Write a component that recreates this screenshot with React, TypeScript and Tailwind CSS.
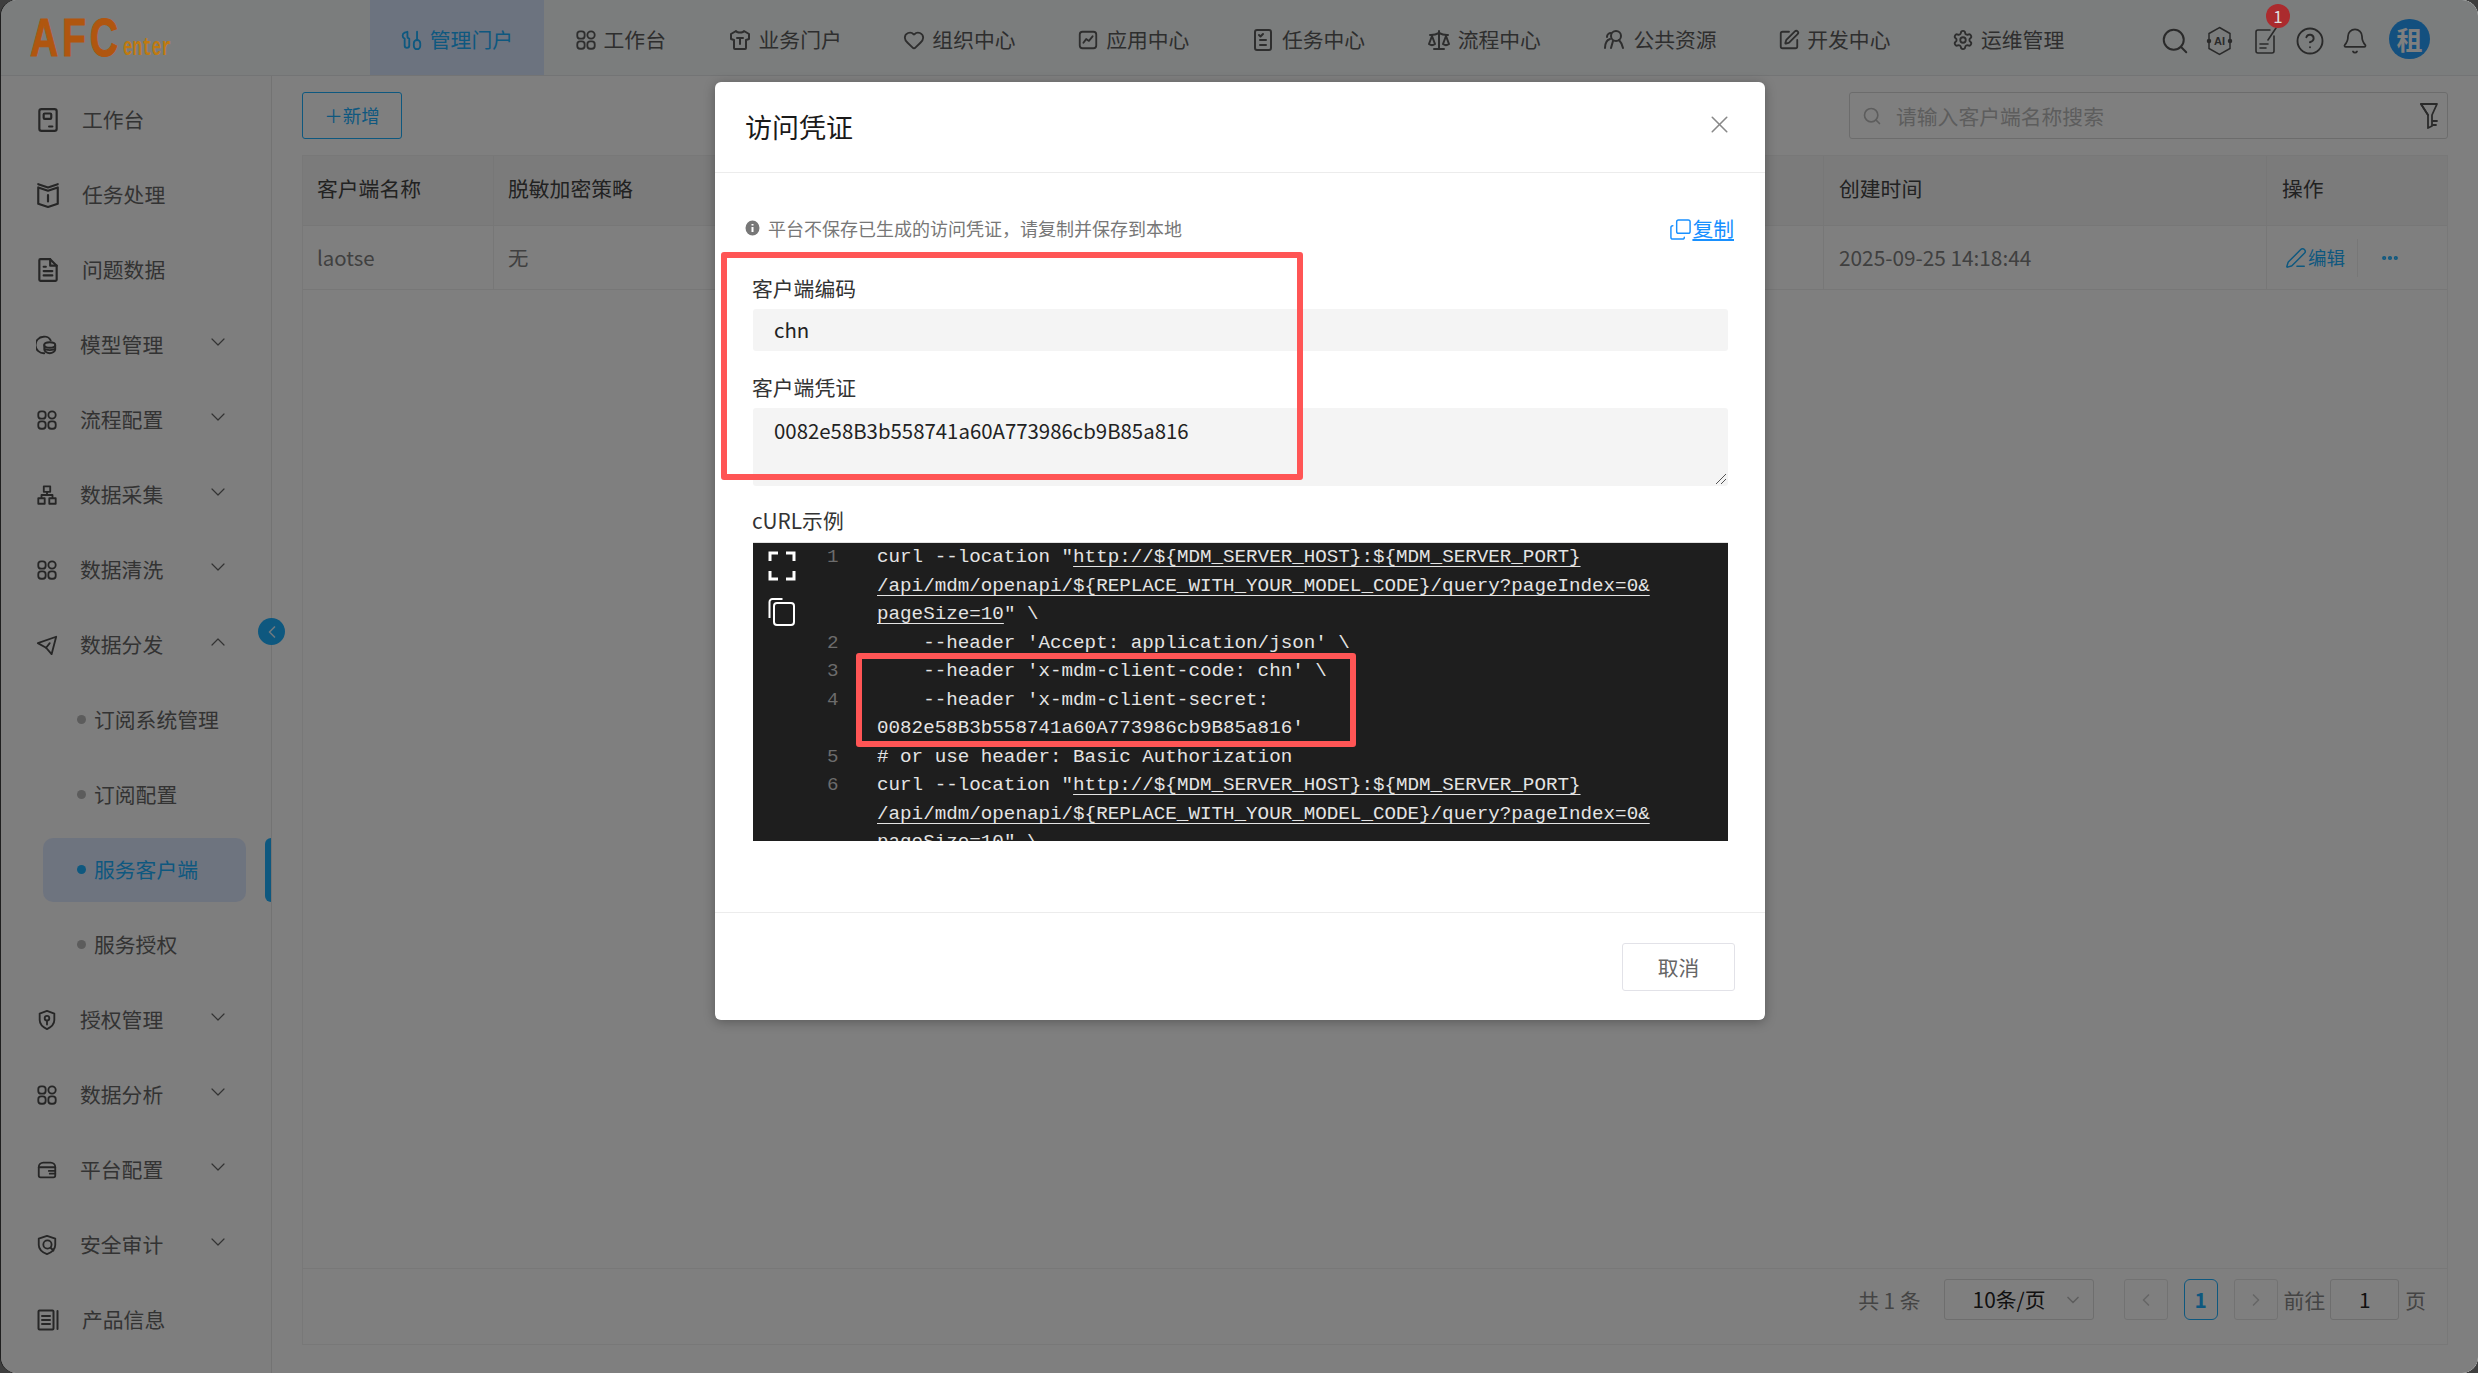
import { ChevronDown, ChevronLeft, ChevronRight, ChevronUp, Search, X, Copy, Bell, CircleHelp, Settings, SquarePen, Scale, Heart, PenLine, Ellipsis } from 'lucide-react';
import type { ReactNode } from 'react';

const cjk = "font-['Noto_Sans_CJK_SC','Liberation_Sans',sans-serif]";

const Svg = ({ children, size = 22 }: { children: ReactNode; size?: number }) => (
  <svg width={size} height={size} viewBox="0 0 24 24" fill="none" stroke="currentColor" strokeWidth="2" strokeLinecap="round" strokeLinejoin="round">
    {children}
  </svg>
);

const GridIcon = ({ size = 22 }: { size?: number }) => (
  <Svg size={size}>
    <rect x="2.5" y="2.5" width="8" height="8" rx="3" />
    <circle cx="17.5" cy="6.5" r="4" />
    <rect x="2.5" y="13.5" width="8" height="8" rx="3" />
    <rect x="13.5" y="13.5" width="8" height="8" rx="3" />
  </Svg>
);
const PhoneIcon = () => (
  <Svg size={26}>
    <rect x="4" y="2" width="16" height="20" rx="2" />
    <rect x="8" y="6" width="7" height="5" rx="1" />
    <path d="M13 18h3" />
  </Svg>
);
const BookIcon = () => (
  <Svg size={26}>
    <path d="M3 5l9 3 9-3v15l-9 3-9-3z" />
    <path d="M3 2l9 3 9-3" />
    <path d="M12 12v6" />
  </Svg>
);
const DocIcon = () => (
  <Svg size={26}>
    <path d="M5 2h9l6 6v13a1 1 0 0 1-1 1H5a1 1 0 0 1-1-1V3a1 1 0 0 1 1-1z" />
    <path d="M14 2v6h6M8 9h2M8 13h8M8 17h8" />
  </Svg>
);
const CoinsIcon = () => (
  <Svg>
    <path d="M9 21a7 7 0 0 1-1-18 7 7 0 0 1 8 4" />
    <ellipse cx="15" cy="12" rx="6" ry="3" />
    <path d="M9 12v5c0 2 3 4 6 4s6-2 6-4v-5M9 16c2 2 10 2 12 0" />
  </Svg>
);
const NetIcon = () => (
  <Svg>
    <rect x="8.5" y="2.5" width="7" height="6" />
    <rect x="2.5" y="15.5" width="7" height="6" />
    <rect x="14.5" y="15.5" width="7" height="6" />
    <path d="M12 9v3M6 15v-3h12v3" />
  </Svg>
);
const SendIcon = () => (
  <Svg>
    <path d="M2 10L22 3l-5 19-6-7z" />
    <path d="M11 15l4-5" />
  </Svg>
);
const ShieldKeyIcon = () => (
  <Svg>
    <path d="M12 2l8 3v7c0 5-4 8-8 10-4-2-8-5-8-10V5z" />
    <circle cx="12" cy="10" r="2.5" />
    <path d="M12 13v4" />
  </Svg>
);
const WalletIcon = () => (
  <Svg size={24}>
    <path d="M3 9a5 5 0 0 1 5-5h8a5 5 0 0 1 5 5v9a2 2 0 0 1-2 2H5a2 2 0 0 1-2-2z" />
    <path d="M3 9h18M14 13h7M15 16h6" />
  </Svg>
);
const ShieldSearchIcon = () => (
  <Svg>
    <path d="M12 2l9 3v7c0 5-4 8-9 10-5-2-9-5-9-10V5z" />
    <circle cx="12.5" cy="11.5" r="4.5" />
    <path d="M16 15l3 3" />
  </Svg>
);
const ListDocIcon = () => (
  <Svg size={24}>
    <rect x="2.5" y="2.5" width="15" height="19" rx="1" />
    <path d="M6 8h8M6 12h8M6 16h8M21.500 3v18" />
  </Svg>
);
const ToolIcon = () => (
  <Svg size={22}>
    <path d="M5 3v5a2.500 2.500 0 0 0 2 2.500V18a2.500 2.500 0 1 1-5 0v-7.500A3.500 3.500 0 0 1 2 4z" transform="translate(2 0)" />
    <rect x="14" y="12" width="7" height="10" rx="3.500" />
    <path d="M17.500 12V3" />
  </Svg>
);
const ShirtIcon = () => (
  <Svg size={24}>
    <path d="M8 3L3 6v5l3 1v8a1 1 0 0 0 1 1h10a1 1 0 0 0 1-1v-8l3-1V6l-5-3c-1 2-7 2-8 0z" />
    <path d="M9 10h6M12 10v6" />
  </Svg>
);
const ChartIcon = () => (
  <Svg size={22}>
    <rect x="3" y="3" width="18" height="18" rx="3" />
    <path d="M7 15l3-4 3 2 4-5" />
  </Svg>
);
const TaskIcon = () => (
  <Svg size={24}>
    <rect x="4" y="2" width="16" height="20" rx="2" />
    <path d="M8 7l1.500 1.500L12 6M9 12h6M9 17h6" />
  </Svg>
);
const UsersIcon = () => (
  <Svg size={24}>
    <circle cx="14" cy="8" r="5" />
    <path d="M3 20c0-5 2-8 5-9M21 20c-1-4-2-6-4-8M9 20l2-7M9 5a4 4 0 0 0-4 4" />
  </Svg>
);
const AiIcon = () => (
  <svg width="27" height="30" viewBox="0 0 27 30" fill="none" stroke="currentColor" strokeWidth="1.500">
    <path d="M13.500 1.500l10.500 6v15l-10.500 6-10.500-6v-15z" />
    <circle cx="3" cy="15" r="1.500" fill="currentColor" />
    <circle cx="24" cy="15" r="1.500" fill="currentColor" />
    <text x="13.500" y="19" textAnchor="middle" fontSize="11" fontWeight="700" fill="currentColor" stroke="none" fontFamily="Liberation Sans, sans-serif">AI</text>
  </svg>
);
const NoteIcon = () => (
  <svg width="24" height="27" viewBox="0 0 24 27" fill="none" stroke="currentColor" strokeWidth="1.600" strokeLinecap="round">
    <path d="M15 3H3a2 2 0 0 0-2 2v19a2 2 0 0 0 2 2h14a2 2 0 0 0 2-2V9" />
    <path d="M5 17h8M5 21h6M13 13l8-12" />
  </svg>
);
const FunnelIcon = () => (
  <svg width="20" height="30" viewBox="0 0 20 30" fill="none" stroke="currentColor" strokeWidth="1.800" strokeLinejoin="round" strokeLinecap="round">
    <path d="M2 3h16l-5 11v11l-4 2v-13z" />
    <path d="M2 3l7 11M14 20h4M14 24h3" />
  </svg>
);
const InfoDot = () => (
  <svg width="15" height="16" viewBox="0 0 15 16">
    <ellipse cx="7.500" cy="8" rx="7" ry="7.500" fill="#777" />
    <path d="M7.500 4v1.500M7.500 7v5" stroke="#fff" strokeWidth="2" />
  </svg>
);
const CodeCopyIcon = () => (
  <svg width="27" height="28" viewBox="0 0 27 28" fill="none" stroke="currentColor" strokeWidth="2">
    <path d="M1.500 20V4a3 3 0 0 1 3-3h10" />
    <rect x="6" y="5" width="20" height="22" rx="3" />
  </svg>
);

const navItems: { label: string; icon: ReactNode; active?: boolean }[] = [
  { label: '管理门户', icon: <ToolIcon />, active: true },
  { label: '工作台', icon: <GridIcon /> },
  { label: '业务门户', icon: <ShirtIcon /> },
  { label: '组织中心', icon: <Heart size={22} strokeWidth={2} /> },
  { label: '应用中心', icon: <ChartIcon /> },
  { label: '任务中心', icon: <TaskIcon /> },
  { label: '流程中心', icon: <Scale size={24} strokeWidth={2} /> },
  { label: '公共资源', icon: <UsersIcon /> },
  { label: '开发中心', icon: <SquarePen size={22} strokeWidth={2} /> },
  { label: '运维管理', icon: <Settings size={22} strokeWidth={2} /> },
];

type MenuRow = { label: string; icon?: ReactNode; arrow?: 'down' | 'up'; sub?: boolean; active?: boolean };

const menu: MenuRow[] = [
  { label: '工作台', icon: <PhoneIcon /> },
  { label: '任务处理', icon: <BookIcon /> },
  { label: '问题数据', icon: <DocIcon /> },
  { label: '模型管理', icon: <CoinsIcon />, arrow: 'down' },
  { label: '流程配置', icon: <GridIcon />, arrow: 'down' },
  { label: '数据采集', icon: <NetIcon />, arrow: 'down' },
  { label: '数据清洗', icon: <GridIcon />, arrow: 'down' },
  { label: '数据分发', icon: <SendIcon />, arrow: 'up' },
  { label: '订阅系统管理', sub: true },
  { label: '订阅配置', sub: true },
  { label: '服务客户端', sub: true, active: true },
  { label: '服务授权', sub: true },
  { label: '授权管理', icon: <ShieldKeyIcon />, arrow: 'down' },
  { label: '数据分析', icon: <GridIcon />, arrow: 'down' },
  { label: '平台配置', icon: <WalletIcon />, arrow: 'down' },
  { label: '安全审计', icon: <ShieldSearchIcon />, arrow: 'down' },
  { label: '产品信息', icon: <ListDocIcon /> },
];

const Header = () => (
  <header className="flex h-[76px] shrink-0 items-stretch border-b border-[#e6e8ea] bg-[#f6fafa]">
    <div className="relative z-10 flex w-[369px] shrink-0 items-start pl-[29px] pt-[8px]">
      {/* logo stays bright through the mask in the shot */}
      <span className="origin-left scale-x-[0.74] font-['Liberation_Sans',sans-serif] text-[53px] font-bold leading-[60px] tracking-[5px] text-[#b0560f] [-webkit-text-stroke:1px_#b0560f]">AFC</span>
      <span className="-ml-[31px] mt-[26px] origin-left scale-x-[0.64] font-['Liberation_Mono',monospace] text-[25px] font-bold leading-[30px] text-[#c07a10]">enter</span>
    </div>
    <nav className="flex">
      {navItems.map((item) => (
        <div
          key={item.label}
          className={`flex items-center gap-[7px] px-[30.8px] pt-[5px] text-[20.8px] ${
            item.active ? 'bg-[#d8e6fe] text-[#1cb0ff]' : 'text-[#5c5c5c]'
          }`}
        >
          {item.icon}
          <span>{item.label}</span>
        </div>
      ))}
    </nav>
    <div className="ml-auto flex items-center gap-[18px] pr-[48px] pt-[6px] text-[#555]">
      <Search size={30} strokeWidth={1.600} className="-mr-[2px] ml-[2px]" />
      <AiIcon />
      <div className="relative -mr-[4px] ml-[4px]">
        <NoteIcon />
        <span className="absolute -top-[23px] left-[11px] z-10 flex h-[24px] w-[24px] items-center justify-center rounded-full bg-[#ab2b2e] text-[17px] text-[#ddd]">1</span>
      </div>
      <CircleHelp size={30} strokeWidth={1.500} className="-mr-[2px] ml-[2px]" />
      <Bell size={28} strokeWidth={1.500} />
      <div className="-mt-[4px] ml-[2px] flex h-[40px] w-[41px] items-center justify-center rounded-full bg-[#26a0ff] text-[26px] font-bold text-white">租</div>
    </div>
  </header>
);

const Sidebar = () => (
  <aside className="relative flex w-[271px] shrink-0 flex-col border-r border-[#e6e6e6] bg-[#fcfcfc] py-[6px] text-[#666]">
    {menu.map((row) => {
      if (row.sub) {
        return (
          <div key={row.label} className="relative flex h-[75px] items-center">
            <div className={`ml-[42px] flex h-[64px] w-[203px] items-center rounded-[10px] pl-[34px] ${row.active ? 'bg-[#dde8ff] text-[#1cb0ff]' : ''}`}>
              <span className={`h-[9px] w-[9px] rounded-full ${row.active ? 'bg-[#1cb0ff]' : 'bg-[#b8b8b8]'}`} />
              <span className="ml-[8px] text-[20.8px]">{row.label}</span>
            </div>
            {row.active && <span className="absolute right-0 top-[6px] h-[64px] w-[6px] rounded-l-[6px] bg-[#1cb0ff]" />}
          </div>
        );
      }
      return (
        <div key={row.label} className={`flex h-[75px] items-center text-[20.8px] ${row.arrow ? 'pl-[35px]' : 'pl-[34px]'}`}>
          <span className={`flex justify-center text-[#4d4d4d] ${row.arrow ? 'w-[22px]' : 'w-[26px]'}`}>{row.icon}</span>
          <span className={row.arrow ? 'ml-[22px]' : 'ml-[21px]'}>{row.label}</span>
          {row.arrow === 'down' && <ChevronDown size={24} strokeWidth={1.200} className="-mt-[6px] ml-[43px]" />}
          {row.arrow === 'up' && <ChevronUp size={24} strokeWidth={1.200} className="-mt-[6px] ml-[43px]" />}
        </div>
      );
    })}
    <span className="absolute -right-[14px] top-[542px] flex h-[27px] w-[27px] items-center justify-center rounded-full bg-[#1cb0ff] text-[#dcefff]">
      <ChevronLeft size={20} />
    </span>
  </aside>
);

const Pagination = () => (
  <div className="flex h-[76px] items-start justify-end border-t border-[#f0f0f0] pr-[21px] pt-[10px] text-[20.8px] text-[#888]">
    <span className="mt-[6px]">共 1 条</span>
    <div className="ml-[23px] flex h-[41px] w-[150px] items-center justify-between rounded-[3px] border border-[#dcdcdc] pl-[28px] pr-[10px] text-[#222]">
      10条/页
      <ChevronDown size={20} className="text-[#bbb]" />
    </div>
    <div className="ml-[30px] flex h-[41px] w-[44px] items-center justify-center rounded-[3px] border border-[#e4e4e4] text-[#ccc]">
      <ChevronLeft size={20} />
    </div>
    <div className="ml-[16px] flex h-[41px] w-[34px] items-center justify-center rounded-[6px] border border-[#1cb0ff] font-bold text-[#1cb0ff]">1</div>
    <div className="ml-[16px] flex h-[41px] w-[44px] items-center justify-center rounded-[3px] border border-[#e4e4e4] text-[#ccc]">
      <ChevronRight size={20} />
    </div>
    <span className="ml-[6px] mt-[6px]">前往</span>
    <div className="ml-[5px] flex h-[41px] w-[69px] items-center justify-center rounded-[3px] border border-[#dcdcdc] text-[#222]">1</div>
    <span className="ml-[6px] mt-[6px]">页</span>
  </div>
);

const Content = () => (
  <main className="flex min-w-0 flex-1 flex-col bg-white pb-[28px] pl-[30px] pr-[30px] pt-[16px]">
    <div className="flex h-[47px] items-stretch justify-between">
      <div className="flex w-[100px] items-center justify-center rounded-[3px] border border-[#1cb0ff] text-[18.5px] text-[#1cb0ff]">＋新增</div>
      <div className="flex w-[599px] items-center rounded-[3px] border border-[#d8d8d8] pl-[12px] pr-[8px] text-[#bbb]">
        <Search size={20} />
        <span className="ml-[14px] mt-[2px] flex-1 text-[20.8px]">请输入客户端名称搜索</span>
        <span className="text-[#555]"><FunnelIcon /></span>
      </div>
    </div>
    <div className="mt-[16px] flex flex-1 flex-col border border-[#f0f0f0]">
      <div className="flex h-[70px] items-stretch border-b border-[#eee] bg-[#f7f7f7] text-[20.8px] text-[#444]">
        <div className="flex w-[191px] items-center border-r border-[#eee] pb-[4px] pl-[14px]">客户端名称</div>
        <div className="flex flex-1 items-center pb-[4px] pl-[14px]">脱敏加密策略</div>
        <div className="flex w-[444px] items-center border-x border-[#eee] pb-[4px] pl-[15px]">创建时间</div>
        <div className="flex w-[180px] items-center pb-[4px] pl-[15px]">操作</div>
      </div>
      <div className="flex h-[64px] items-stretch border-b border-[#eee] text-[20.4px] text-[#808080]">
        <div className="flex w-[191px] items-center border-r border-[#eee] pl-[14px]">laotse</div>
        <div className="flex flex-1 items-center pl-[14px]">无</div>
        <div className="flex w-[444px] items-center border-x border-[#eee] pl-[15px] text-[20.8px]">2025-09-25 14:18:44</div>
        <div className="flex w-[180px] items-center pl-[18px] text-[#1cb0ff]">
          <PenLine size={22} strokeWidth={1.600} />
          <span className="ml-[1px] text-[18.5px]">编辑</span>
          <span className="ml-[12px] h-[38px] border-l border-[#eee]" />
          <Ellipsis size={20} strokeWidth={3} className="ml-[22px]" />
        </div>
      </div>
      <div className="flex-1" />
      <Pagination />
    </div>
  </main>
);

const U = ({ children }: { children: ReactNode }) => <span className="underline underline-offset-[4px]">{children}</span>;

const url1 = 'http://${MDM_SERVER_HOST}:${MDM_SERVER_PORT}';
const url2 = '/api/mdm/openapi/${REPLACE_WITH_YOUR_MODEL_CODE}/query?pageIndex=0&';

const codeRows: { n?: number; text: ReactNode }[] = [
  { n: 1, text: <>curl --location "<U>{url1}</U></> },
  { text: <U>{url2}</U> },
  { text: <><U>pageSize=10</U>" \</> },
  { n: 2, text: "    --header 'Accept: application/json' \\" },
  { n: 3, text: "    --header 'x-mdm-client-code: chn' \\" },
  { n: 4, text: "    --header 'x-mdm-client-secret:" },
  { text: "0082e58B3b558741a60A773986cb9B85a816'" },
  { n: 5, text: '# or use header: Basic Authorization' },
  { n: 6, text: <>curl --location "<U>{url1}</U></> },
  { text: <U>{url2}</U> },
  { text: <><U>pageSize=10</U>" \</> },
];

const CodeBlock = () => (
  <div className="relative ml-[1px] mt-[7px] h-[299px] overflow-hidden border-t border-[#e2e2e2] bg-[#1e1e1e] text-[#e4e4e4]">
    <div className="absolute left-[15px] top-[8px] flex flex-col gap-[17px] text-white">
      <svg width="28" height="30" viewBox="0 0 28 30" fill="none" stroke="currentColor" strokeWidth="3">
        <path d="M2 10V2h8M18 2h8v8M2 20v8h8M18 28h8v-8" />
      </svg>
      <CodeCopyIcon />
    </div>
    <div className="pl-[74px] font-['Liberation_Mono',monospace] text-[19.23px] leading-[28.5px]">
      {codeRows.map((row, i) => (
        <div key={i} className="flex whitespace-pre">
          <span className="w-[50px] shrink-0 text-[#6c6c6c]">{row.n ?? ''}</span>
          <span>{row.text}</span>
        </div>
      ))}
    </div>
  </div>
);

const Modal = () => (
  <div className="flex h-[938px] w-[1050px] flex-col rounded-[6px] bg-white shadow-[0_2px_12px_rgba(0,0,0,0.3)]">
    <div className="flex h-[91px] shrink-0 items-center justify-between border-b border-[#ececec] pl-[30px] pr-[31px]">
      <span className="text-[27px] text-[#1a1a1a]">访问凭证</span>
      <X size={29} strokeWidth={1.300} className="-mt-[6px] text-[#888]" />
    </div>
    <div className="flex-1 px-[37px] pt-[35px]">
      <div className="-ml-[7px] -mr-[6px] flex h-[40px] items-center justify-between">
        <span className="flex items-center gap-[8px] text-[18px] text-[#777]">
          <InfoDot />
          平台不保存已生成的访问凭证，请复制并保存到本地
        </span>
        <span className="mt-[2px] flex items-center text-[20.8px] text-[#1890ff]">
          <Copy size={23} strokeWidth={1.500} className="-scale-y-100" />
          <span className="underline">复制</span>
        </span>
      </div>
      <div className="mt-[25px] h-[30px] text-[20.8px] leading-[30px] text-[#333]">客户端编码</div>
      <div className="ml-[1px] mt-[6px] flex h-[42px] items-center rounded-[3px] bg-[#f4f4f4] pb-[2px] pl-[21px] text-[20.4px] text-[#222]">chn</div>
      <div className="mt-[21px] h-[30px] text-[20.8px] leading-[30px] text-[#333]">客户端凭证</div>
      <div className="relative ml-[1px] mt-[6px] h-[78px] rounded-[3px] bg-[#f4f4f4] pl-[21px] pt-[7px] text-[20.4px] leading-[30px] text-[#222]">
        0082e58B3b558741a60A773986cb9B85a816
        <svg className="absolute bottom-[1px] right-[1px]" width="12" height="12" viewBox="0 0 12 12" stroke="#555" strokeWidth="1">
          <path d="M1 11L11 1M6 11l5-5" />
        </svg>
      </div>
      <div className="mt-[19px] h-[30px] text-[20.8px] leading-[30px] text-[#333]">cURL示例</div>
      <CodeBlock />
    </div>
    <div className="flex h-[108px] shrink-0 items-start justify-end border-t border-[#ececec] pr-[30px] pt-[30px]">
      <div className="flex h-[48px] w-[113px] items-center justify-center rounded-[3px] border border-[#e2e2e8] pt-[2px] text-[20.8px] text-[#666]">取消</div>
    </div>
  </div>
);

export default function App() {
  return (
    <div className={`relative h-screen w-screen overflow-hidden bg-[#3e3e3e] pl-[1px] ${cjk}`}>
      <div className="flex h-full flex-col overflow-hidden rounded-[16px] bg-white">
        <Header />
        <div className="flex min-h-0 flex-1">
          <Sidebar />
          <Content />
        </div>
      </div>
      <div className="absolute inset-0 flex items-start justify-center rounded-[16px] bg-black/50 pl-[2px] pt-[82px]">
        <Modal />
      </div>
      {/* red annotation boxes drawn on top of the shot */}
      <div className="absolute left-[721px] top-[252px] h-[228px] w-[582px] rounded-[3px] border-[6px] border-[#ff5555]" />
      <div className="absolute left-[856px] top-[653px] h-[94px] w-[500px] rounded-[3px] border-[6px] border-[#ff5555]" />
    </div>
  );
}
